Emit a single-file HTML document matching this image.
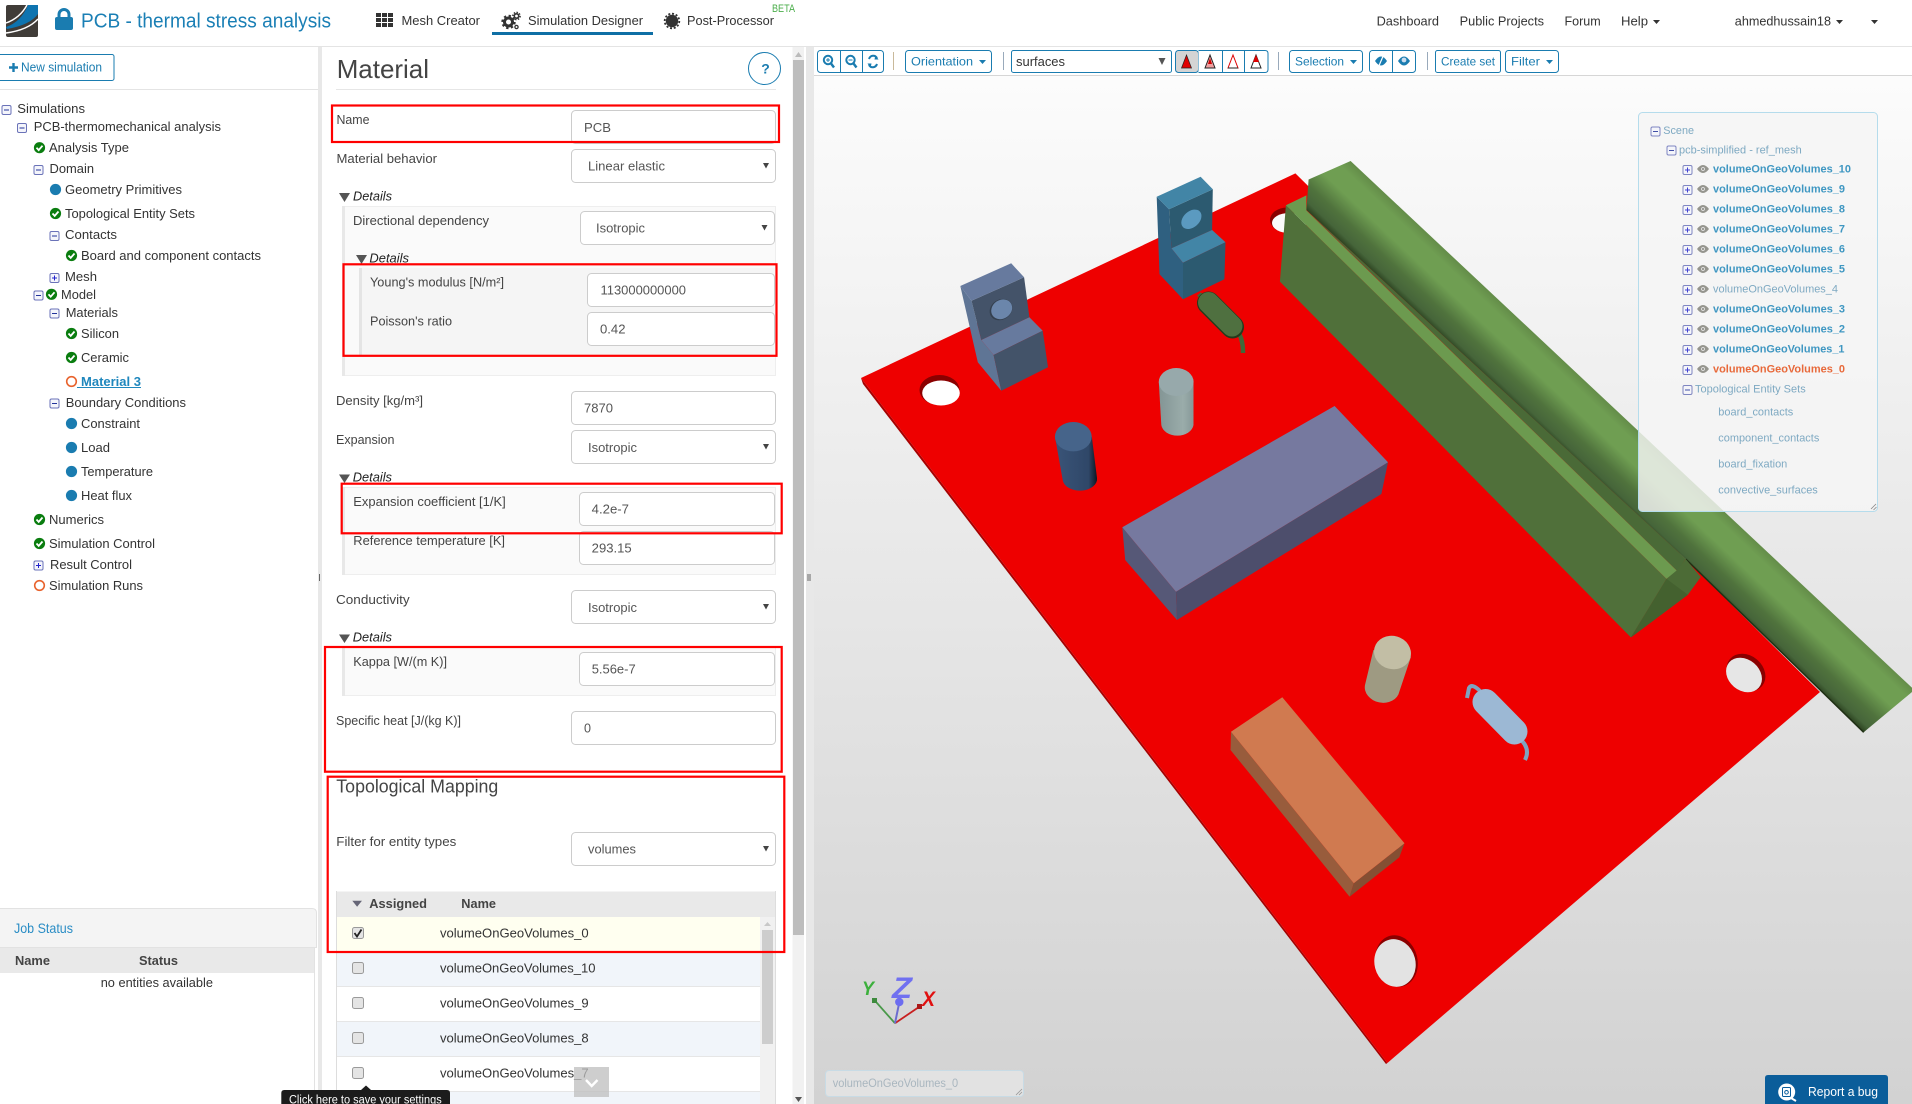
<!DOCTYPE html>
<html lang="en"><head><meta charset="utf-8"><title>PCB - thermal stress analysis</title>
<style>
html,body{margin:0;padding:0;width:1912px;height:1104px;overflow:hidden;background:#fff}
svg{display:block}
text{font-family:"Liberation Sans",Arial,sans-serif;font-size:13px;white-space:pre}
.nv{fill:#333}.l{fill:#444}.v{fill:#555}.n{fill:#333}
.h{font-weight:bold;fill:#444}
.it{font-style:italic;fill:#222}
.tb{fill:#1a7cb0;font-size:12px}
.st{fill:#7ea9c2;font-size:11px}
.sb{fill:#3f97c2;font-size:11px;font-weight:bold}
.inp{fill:#fff;stroke:#ccc}
.red{fill:none;stroke:#f00;stroke-width:2.2}
.btn{fill:#fff;stroke:#1a7cb0}
.car{fill:#444}
</style></head><body>
<svg width="1912" height="1104" viewBox="0 0 1912 1104" xmlns="http://www.w3.org/2000/svg">
<defs>
<linearGradient id="bg" x1="0" y1="76" x2="0" y2="1104" gradientUnits="userSpaceOnUse"><stop offset="0" stop-color="#fcfcfc"/><stop offset="1" stop-color="#d2d2d2"/></linearGradient>
<linearGradient id="rail" x1="1863.7" y1="732.3" x2="1908.5" y2="684.5" gradientUnits="userSpaceOnUse"><stop offset="0" stop-color="#2c4220"/><stop offset=".1" stop-color="#46653a"/><stop offset=".3" stop-color="#50733d"/><stop offset=".58" stop-color="#6f9e52"/><stop offset=".85" stop-color="#6f9e52"/><stop offset="1" stop-color="#648d49"/></linearGradient>
<linearGradient id="cyl1" x1="0" x2="1" y1="0" y2="0"><stop offset="0" stop-color="#839595"/><stop offset=".7" stop-color="#9aacaa"/><stop offset="1" stop-color="#879999"/></linearGradient>
<linearGradient id="cyl2" x1="0" x2="1" y1="0" y2="0"><stop offset="0" stop-color="#3a5478"/><stop offset=".8" stop-color="#2f4768"/><stop offset="1" stop-color="#0e1622"/></linearGradient>
<g id="ck"><circle r="5.6" fill="#0a7d0f"/><path d="M-3 0L-.8 2.4L3 -2" fill="none" stroke="#fff" stroke-width="1.8"/></g>
<circle id="dt" r="5.6" fill="#1a7cb0"/>
<circle id="rg" r="4.8" fill="none" stroke="#e8622c" stroke-width="1.6"/>
<g id="mi"><rect x="-4.5" y="-4.5" width="9" height="9" rx="1.5" fill="#f4f5fb" stroke="#6a72b8"/><path d="M-2.5 0H2.5" stroke="#223399"/></g>
<g id="pl"><rect x="-4.5" y="-4.5" width="9" height="9" rx="1.5" fill="#f4f5fb" stroke="#6a72b8"/><path d="M-2.5 0H2.5M0 -2.5V2.5" stroke="#2222cc"/></g>
<g id="ey"><path d="M-6 0Q0 -8 6 0Q0 8 -6 0Z" fill="#85857d"/><circle r="1.9" fill="#e8e8e8"/><circle r="1" fill="#6f6f67"/></g>
</defs>

<!-- 3D viewport -->
<rect x="814" y="76" width="1098" height="1028" fill="url(#bg)"/>
<rect x="814" y="75" width="1098" height="1" fill="#d6d6d6"/>
<!-- board -->
<polygon points="861,378 863,384 1386,1064 1387.4,1063" fill="#a80000"/>
<polygon points="861,378 1295.4,173.4 1820,692 1387.4,1063" fill="#ee0000"/>
<!-- holes -->
<ellipse cx="939.5" cy="390" rx="20" ry="15" fill="#8a0000"/><ellipse cx="941" cy="393" rx="18.8" ry="12.5" fill="#fff"/>
<ellipse cx="1287" cy="220" rx="17" ry="12.5" fill="#8a0000"/><ellipse cx="1289" cy="223" rx="17" ry="10" fill="#fbfbfb"/>
<ellipse cx="1746" cy="672.5" rx="21" ry="17" transform="rotate(40 1746 672.5)" fill="#8a0000"/><ellipse cx="1744" cy="675" rx="19.5" ry="15.5" transform="rotate(40 1744 675)" fill="#e6e6e6"/>
<ellipse cx="1396.5" cy="961" rx="21" ry="26" transform="rotate(-14 1396.5 961)" fill="#8a0000"/><ellipse cx="1395" cy="963" rx="20.5" ry="24" transform="rotate(-14 1395 963)" fill="#e3e3e3"/>
<!-- left bracket -->
<polygon points="960.3,286 971.5,300.7 981.3,340 993.6,355 1001.3,390.7 977.8,362.3 970,328.3" fill="#5f7595"/>
<polygon points="971.5,300.7 1024.1,277.3 1029.4,317.3 981.3,340" fill="#445369"/>
<polygon points="960.3,286 1011.2,263.3 1024.1,277.3 971.5,300.7" fill="#677a9e"/>
<polygon points="981.3,340 1029.4,317.3 1042.7,330.7 993.6,355" fill="#677a9e"/>
<polygon points="993.6,355 1042.7,330.7 1048,367.3 1001.3,390.7" fill="#435369"/>
<ellipse cx="1001" cy="309.6" rx="12" ry="10" transform="rotate(-35 1001 309.6)" fill="#34404f"/>
<ellipse cx="1001.7" cy="309.3" rx="11" ry="9.3" transform="rotate(-35 1001.7 309.3)" fill="#6b86ab"/>
<!-- right bracket -->
<polygon points="1156.7,196.7 1169,209.3 1171.5,248.3 1183,262.7 1183,299.3 1159.5,274.3" fill="#2f6080"/>
<polygon points="1169,209.3 1212.8,189.3 1212.1,230 1171.5,248.3" fill="#2c5a70"/>
<polygon points="1156.7,196.7 1200.6,176.7 1212.8,189.3 1169,209.3" fill="#4285a6"/>
<polygon points="1171.5,248.3 1212.1,230 1225.5,242.3 1183,262.7" fill="#4285a6"/>
<polygon points="1183,262.7 1225.5,242.3 1224.4,279.3 1183,299.3" fill="#2c5a70"/>
<ellipse cx="1191.4" cy="219.3" rx="11.5" ry="8" transform="rotate(-42 1191.4 219.3)" fill="#5b9ac0"/>
<!-- green resistor -->
<path d="M1199 294L1207 303" stroke="#3f6a3a" stroke-width="5" fill="none"/>
<path d="M1236.7 330.7Q1243 337 1243 353" stroke="#3f6a3a" stroke-width="4.5" fill="none"/>
<path d="M1208.5 303L1232.5 327" stroke="#243a1c" stroke-width="23" stroke-linecap="round"/>
<path d="M1208.5 302.5L1232 326" stroke="#4f7040" stroke-width="21" stroke-linecap="round"/>
<!-- grey cylinder -->
<path d="M1158.8 381.7L1161.3 425A16.2 12 0 0 0 1193.5 425L1193.5 381.7Z" fill="url(#cyl1)"/>
<ellipse cx="1176.2" cy="382" rx="17.4" ry="14" fill="#97a9ab"/>
<!-- blue cylinder -->
<path d="M1055 436.7L1062.7 480A17 11.5 0 0 0 1097 478L1091.8 436.7Z" fill="url(#cyl2)"/>
<ellipse cx="1073.3" cy="436.7" rx="18.4" ry="14.7" fill="#46648a"/>
<!-- purple box -->
<polygon points="1122.3,527.3 1176,591.7 1177,620 1125.2,560" fill="#565877"/>
<polygon points="1176,591.7 1388,462.3 1381.4,494 1177,620" fill="#4d4e6c"/>
<polygon points="1122.3,527.3 1334.6,406 1388,462.3 1176,591.7" fill="#76799f"/>
<!-- orange box -->
<polygon points="1231,731.7 1353.8,883.3 1349.6,896.7 1230.5,750" fill="#985c3c"/>
<polygon points="1353.8,883.3 1404.5,843.3 1399.3,857.3 1349.6,896.7" fill="#854f33"/>
<polygon points="1231,731.7 1282.3,697.3 1404.5,843.3 1353.8,883.3" fill="#d07a50"/>
<!-- beige cylinder -->
<path d="M1373.4 650L1365 685A17 14 10 0 0 1399.3 691.7L1411 656.7Z" fill="#9e9a82"/>
<ellipse cx="1392.5" cy="652.5" rx="18.6" ry="16.6" transform="rotate(15 1392.5 652.5)" fill="#c2bea5"/>
<!-- light-blue capsule -->
<path d="M1480 691Q1472 683 1469 688L1467 698" stroke="#7ea3c0" stroke-width="4" fill="none"/>
<path d="M1519 738Q1531 748 1525 760" stroke="#7ea3c0" stroke-width="4" fill="none"/>
<path d="M1485.5 702L1514.5 731.5" stroke="#9cb8d4" stroke-width="26" stroke-linecap="round"/>
<!-- green connector -->
<polygon points="1350.6,161 1912,687.7 1912,692 1863.7,732.3 1685.8,559.1 1306.4,210 1308.6,179.5" fill="url(#rail)"/>
<path d="M1685.8 559.1L1863.7 732.3" stroke="#1f2f14" stroke-width="1.5"/>
<polygon points="1306.4,210 1685.8,559 1677.2,571" fill="#4a6a37"/>
<polygon points="1285.9,205.2 1279.9,281.6 1630.9,637.4 1666.5,578.9" fill="#50703a"/>
<polygon points="1285.9,205.2 1306.4,195.4 1306.4,210.4 1677.2,571 1666.5,578.9" fill="#6c9a4f"/>
<polygon points="1666.5,578.9 1677.2,570 1685.8,559.1 1700.8,577 1687.9,594.7 1630.9,637.4" fill="#4c6b36"/>
<polygon points="1666.5,578.9 1687.9,594.7 1630.9,637.4" fill="#44612f"/>
<!-- axes -->
<path d="M895 1023.3L874.3 1000" stroke="#4a994a" stroke-width="1.8"/><rect x="872" y="998" width="5" height="5" fill="#3d8a3d"/>
<path d="M895 1023.3L919.3 1006.7" stroke="#c82020" stroke-width="1.8"/><rect x="917" y="1004" width="5" height="5" fill="#aa1818"/>
<path d="M895 1023.3L899.3 1002.3" stroke="#6c6cd0" stroke-width="2"/><circle cx="899.3" cy="1002" r="4.2" fill="#6c6cf0"/>
<text x="862" y="995" textLength="12" lengthAdjust="spacingAndGlyphs" style="font-size:19px;font-weight:bold;font-style:italic;fill:#3cb03c">Y</text>
<text x="892" y="998" textLength="20" lengthAdjust="spacingAndGlyphs" style="font-size:30px;font-weight:bold;font-style:italic;fill:#7070f0">Z</text>
<text x="922" y="1006" textLength="13" lengthAdjust="spacingAndGlyphs" style="font-size:21px;font-weight:bold;font-style:italic;fill:#e01010">X</text>
<!-- bottom name box -->
<rect x="825.5" y="1070.5" width="198" height="26" rx="3.5" fill="#e2e2e2" stroke="#c8dbe5"/>
<text x="832.7" y="1087" textLength="125.5" lengthAdjust="spacingAndGlyphs" style="font-size:12px;fill:#a9b6bf">volumeOnGeoVolumes_0</text>
<path d="M1016 1095L1022 1089M1019 1095L1022 1092" stroke="#999" stroke-width=".8"/>
<!-- scene tree -->
<rect x="1638.5" y="112.5" width="239" height="399" rx="4" fill="#f5f5f5" fill-opacity=".82" stroke="#b5dcec"/>
<path d="M1871 509L1876 504M1873.5 510L1876.5 507" stroke="#888" stroke-width=".8"/>
<g opacity=".85">
<use href="#mi" x="1655.5" y="131.5"/><use href="#mi" x="1671.5" y="150.5"/>
<use href="#pl" x="1687.5" y="170"/><use href="#pl" x="1687.5" y="190"/><use href="#pl" x="1687.5" y="210"/><use href="#pl" x="1687.5" y="230"/><use href="#pl" x="1687.5" y="250"/><use href="#pl" x="1687.5" y="270"/><use href="#pl" x="1687.5" y="290"/><use href="#pl" x="1687.5" y="310"/><use href="#pl" x="1687.5" y="330"/><use href="#pl" x="1687.5" y="350"/><use href="#pl" x="1687.5" y="370"/>
<use href="#mi" x="1687.5" y="390"/>
<use href="#ey" x="1703" y="169"/><use href="#ey" x="1703" y="189"/><use href="#ey" x="1703" y="209"/><use href="#ey" x="1703" y="229"/><use href="#ey" x="1703" y="249"/><use href="#ey" x="1703" y="269"/><use href="#ey" x="1703" y="289"/><use href="#ey" x="1703" y="309"/><use href="#ey" x="1703" y="329"/><use href="#ey" x="1703" y="349"/><use href="#ey" x="1703" y="369"/>
</g>
<text class="st" x="1663.3" y="134" textLength="30.7" lengthAdjust="spacingAndGlyphs">Scene</text>
<text class="st" x="1679" y="153.3" textLength="122.7" lengthAdjust="spacingAndGlyphs">pcb-simplified - ref_mesh</text>
<text class="sb" x="1713" y="172.7" textLength="138" lengthAdjust="spacingAndGlyphs">volumeOnGeoVolumes_10</text>
<text class="sb" x="1713" y="192.7" textLength="132" lengthAdjust="spacingAndGlyphs">volumeOnGeoVolumes_9</text>
<text class="sb" x="1713" y="212.7" textLength="132" lengthAdjust="spacingAndGlyphs">volumeOnGeoVolumes_8</text>
<text class="sb" x="1713" y="232.7" textLength="132" lengthAdjust="spacingAndGlyphs">volumeOnGeoVolumes_7</text>
<text class="sb" x="1713" y="252.7" textLength="132" lengthAdjust="spacingAndGlyphs">volumeOnGeoVolumes_6</text>
<text class="sb" x="1713" y="272.7" textLength="132" lengthAdjust="spacingAndGlyphs">volumeOnGeoVolumes_5</text>
<text class="st" x="1713" y="292.7" textLength="125" lengthAdjust="spacingAndGlyphs">volumeOnGeoVolumes_4</text>
<text class="sb" x="1713" y="312.7" textLength="132" lengthAdjust="spacingAndGlyphs">volumeOnGeoVolumes_3</text>
<text class="sb" x="1713" y="332.7" textLength="132" lengthAdjust="spacingAndGlyphs">volumeOnGeoVolumes_2</text>
<text class="sb" x="1713" y="352.7" textLength="131.5" lengthAdjust="spacingAndGlyphs">volumeOnGeoVolumes_1</text>
<text class="sb" x="1713" y="372.7" textLength="132" lengthAdjust="spacingAndGlyphs" style="fill:#e8693a">volumeOnGeoVolumes_0</text>
<text class="st" x="1695" y="392.7" textLength="110.7" lengthAdjust="spacingAndGlyphs">Topological Entity Sets</text>
<text class="st" x="1718.3" y="415.7" textLength="75" lengthAdjust="spacingAndGlyphs">board_contacts</text>
<text class="st" x="1718.3" y="441.7" textLength="101" lengthAdjust="spacingAndGlyphs">component_contacts</text>
<text class="st" x="1718.3" y="467.7" textLength="69" lengthAdjust="spacingAndGlyphs">board_fixation</text>
<text class="st" x="1718.3" y="493.7" textLength="99.5" lengthAdjust="spacingAndGlyphs">convective_surfaces</text>
<!-- report a bug -->
<path d="M1765 1104V1078Q1765 1075 1768 1075H1885Q1888 1075 1888 1078V1104Z" fill="#0a5d9a"/>
<circle cx="1786.7" cy="1092" r="8.5" fill="#fff"/><path d="M1791 1098L1796 1101" stroke="#fff" stroke-width="2"/><rect x="1782.5" y="1087.5" width="8" height="9" rx="1" fill="none" stroke="#0a5d9a"/><circle cx="1786.5" cy="1092.3" r="1.8" fill="none" stroke="#0a5d9a"/>
<text x="1808" y="1096" textLength="70" lengthAdjust="spacingAndGlyphs" style="font-size:12.5px;fill:#fff">Report a bug</text>

<!-- toolbar -->
<rect x="817.5" y="50.5" width="66" height="22" rx="3" class="btn"/><path d="M840.5 50.5V72.5M862.5 50.5V72.5" stroke="#1a7cb0"/>
<g fill="none" stroke="#1a7cb0"><circle cx="828" cy="60" r="4.2" stroke-width="2"/><path d="M831 63.5L834 67.5" stroke-width="2.4"/><path d="M826 60H830M828 58V62" stroke-width="1"/>
<circle cx="850.5" cy="60" r="4.2" stroke-width="2"/><path d="M853.5 63.5L856.5 67.5" stroke-width="2.4"/><path d="M848.5 60H852.5" stroke-width="1"/>
<path d="M869 59A4.5 5 0 0 1 877 58M877 64A4.5 5 0 0 1 869 65" stroke-width="2"/></g>
<path d="M875.5 55L878.5 59.5H874.5ZM870.5 68L867.5 63.5H871.5Z" fill="#1a7cb0"/>
<rect x="893" y="52" width="1" height="18" fill="#c9b99a"/>
<rect x="905.5" y="50.5" width="86" height="22" rx="3" class="btn"/>
<text class="tb" x="911" y="65.7" textLength="62" lengthAdjust="spacingAndGlyphs">Orientation</text><polygon points="979,60 986,60 982.5,64" fill="#1a7cb0"/>
<rect x="1003" y="52" width="1" height="18" fill="#9ab"/>
<rect x="1011.5" y="50.5" width="160" height="22" rx="2" fill="#fff" stroke="#1a7cb0"/>
<text x="1016" y="66" textLength="49" lengthAdjust="spacingAndGlyphs" style="fill:#333">surfaces</text><polygon points="1158.5,58 1165.5,58 1162,65" fill="#555"/>
<rect x="1175.5" y="50.5" width="23" height="22" rx="3" fill="#d4d4d4" stroke="#1a7cb0"/>
<path d="M1198.5 50.5H1265Q1268 50.5 1268 53.5V69.5Q1268 72.5 1265 72.5H1198.5" class="btn"/><path d="M1222.5 50.5V72.5M1244.5 50.5V72.5" stroke="#1a7cb0"/>
<polygon points="1181.5,68 1186.5,55 1191.5,68" fill="#e00000" stroke="#222" stroke-width=".7"/>
<polygon points="1205,68 1210,55 1215,68" fill="#f0a0a0" stroke="#222" stroke-width="1"/><polygon points="1208,64 1210,58 1212,64" fill="#d00000"/>
<polygon points="1228,68 1233,55 1238,68" fill="#fff" stroke="#d00" stroke-width="1"/><path d="M1228 68H1238" stroke="#222"/>
<polygon points="1251,68 1256,55 1261,68" fill="#fff" stroke="#222" stroke-width="1"/><polygon points="1253,62 1256,55 1259,62" fill="#e00000"/>
<rect x="1278" y="52" width="1" height="18" fill="#9ab"/>
<rect x="1289.5" y="50.5" width="73" height="22" rx="3" class="btn"/>
<text class="tb" x="1295" y="65.7" textLength="49" lengthAdjust="spacingAndGlyphs">Selection</text><polygon points="1350,60 1357,60 1353.5,64" fill="#1a7cb0"/>
<rect x="1369.5" y="50.5" width="46" height="22" rx="3" class="btn"/><path d="M1392.5 50.5V72.5" stroke="#1a7cb0"/>
<path d="M1375 61Q1381 52 1387 61Q1381 70 1375 61Z" fill="#1a7cb0"/><path d="M1378 68L1384 54" stroke="#fff" stroke-width="1.2"/>
<path d="M1398 61Q1404 52 1410 61Q1404 70 1398 61Z" fill="#1a7cb0"/><circle cx="1404" cy="60" r="2.4" fill="#cde"/>
<rect x="1427" y="52" width="1" height="18" fill="#9ab"/>
<rect x="1435.5" y="50.5" width="65" height="22" rx="2" class="btn"/>
<text class="tb" x="1441" y="65.7" textLength="54" lengthAdjust="spacingAndGlyphs">Create set</text>
<rect x="1505.5" y="50.5" width="53" height="22" rx="3" class="btn"/>
<text class="tb" x="1511" y="65.7" textLength="29" lengthAdjust="spacingAndGlyphs">Filter</text><polygon points="1546,60 1553,60 1549.5,64" fill="#1a7cb0"/>

<!-- gutters -->
<rect x="318" y="47" width="4" height="1057" fill="#e8e8e8"/>
<rect x="319" y="574" width="1" height="7" fill="#666"/>
<rect x="792.5" y="47" width="11.5" height="1057" fill="#f1f1f1"/>
<rect x="793" y="60" width="11" height="875" fill="#bdbdbd"/>
<polygon points="798.5,52 802,57 795,57" fill="#bbb"/>
<polygon points="795,1097 802,1097 798.5,1102" fill="#555"/>
<rect x="806" y="47" width="8" height="1057" fill="#e8e8e8"/>
<rect x="807.5" y="574" width="1" height="7" fill="#666"/><rect x="809.5" y="574" width="1" height="7" fill="#666"/>

<!-- header -->
<rect x="0" y="46" width="1912" height="1" fill="#e4e4e4"/>
<rect x="6" y="5" width="32" height="32" rx="2" fill="#403c38"/>
<path d="M28 5H38V14Q30 25 7 29L6 27Q21 22 28 5Z" fill="#0e74b0"/>
<path d="M6 23Q20 18 27 5" stroke="#fff" stroke-width="1.4" fill="none"/>
<path d="M6 33Q28 30 38 19" stroke="#fff" stroke-width="1.4" fill="none"/>
<rect x="55" y="17" width="18" height="13" rx="2" fill="#1a7cb0"/>
<path d="M59 18V14.5A5 5 0 0 1 69 14.5V18" fill="none" stroke="#1a7cb0" stroke-width="3"/>
<text x="81" y="27.7" textLength="250" lengthAdjust="spacingAndGlyphs" style="font-size:20px;fill:#1a7fb5">PCB - thermal stress analysis</text>
<g fill="#333"><rect x="376" y="13" width="5" height="4"/><rect x="382" y="13" width="5" height="4"/><rect x="388" y="13" width="5" height="4"/><rect x="376" y="18" width="5" height="4"/><rect x="382" y="18" width="5" height="4"/><rect x="388" y="18" width="5" height="4"/><rect x="376" y="23" width="5" height="4"/><rect x="382" y="23" width="5" height="4"/><rect x="388" y="23" width="5" height="4"/></g>
<text class="nv" x="401.5" y="25" textLength="78.5" lengthAdjust="spacingAndGlyphs">Mesh Creator</text>
<g fill="none" stroke="#333"><circle cx="508.5" cy="22" r="4" stroke-width="3"/><circle cx="508.5" cy="22" r="6" stroke-width="2.4" stroke-dasharray="2.3 2.4"/><circle cx="516.5" cy="16" r="2.2" stroke-width="1.6"/><circle cx="516.5" cy="16" r="3.6" stroke-width="1.5" stroke-dasharray="1.5 1.3"/><circle cx="516.5" cy="27" r="1.6" stroke-width="1.3"/></g>
<text class="nv" x="528" y="25" textLength="115" lengthAdjust="spacingAndGlyphs">Simulation Designer</text>
<rect x="492" y="32" width="161" height="3" fill="#0f6fa5"/>
<circle cx="672" cy="21" r="6.2" fill="#333"/><circle cx="672" cy="21" r="7.3" fill="none" stroke="#333" stroke-width="1.8" stroke-dasharray="2 1.8"/>
<text class="nv" x="687" y="25" textLength="87" lengthAdjust="spacingAndGlyphs">Post-Processor</text>
<text x="772" y="12" textLength="23" lengthAdjust="spacingAndGlyphs" style="font-size:11px;fill:#4cae4c">BETA</text>
<text class="nv" x="1376.6" y="25.7" textLength="62.4" lengthAdjust="spacingAndGlyphs">Dashboard</text>
<text class="nv" x="1459.6" y="25.7" textLength="84.4" lengthAdjust="spacingAndGlyphs">Public Projects</text>
<text class="nv" x="1564.5" y="25.7" textLength="36.2" lengthAdjust="spacingAndGlyphs">Forum</text>
<text class="nv" x="1621" y="25.7" textLength="27" lengthAdjust="spacingAndGlyphs">Help</text>
<polygon points="1653,20 1660,20 1656.5,24" fill="#333"/>
<text class="nv" x="1734.8" y="25.7" textLength="96.2" lengthAdjust="spacingAndGlyphs">ahmedhussain18</text>
<polygon points="1836,20 1843,20 1839.5,24" fill="#333"/>
<polygon points="1871,20 1878,20 1874.5,24" fill="#333"/>

<!-- left panel -->
<rect x="-3" y="54.5" width="117" height="26" rx="2" class="btn"/>
<path d="M9 68H18M13.5 63.5V72.5" stroke="#1a7cb0" stroke-width="2.4" transform="translate(0,-.5)"/>
<text x="21" y="71.7" textLength="81" lengthAdjust="spacingAndGlyphs" style="font-size:13px;fill:#1a7cb0">New simulation</text>
<rect x="0" y="89" width="318" height="1" fill="#e4e4e4"/>
<use href="#mi" x="6.5" y="110"/><text class="n" x="17.3" y="113" textLength="67.7" lengthAdjust="spacingAndGlyphs">Simulations</text>
<use href="#mi" x="22" y="128"/><text class="n" x="33.7" y="131" textLength="187.3" lengthAdjust="spacingAndGlyphs">PCB-thermomechanical analysis</text>
<use href="#ck" x="39.5" y="147.7"/><text class="n" x="49" y="152" textLength="80" lengthAdjust="spacingAndGlyphs">Analysis Type</text>
<use href="#mi" x="38.5" y="170"/><text class="n" x="49.5" y="173" textLength="44.5" lengthAdjust="spacingAndGlyphs">Domain</text>
<use href="#dt" x="55.5" y="189.5"/><text class="n" x="65" y="194" textLength="117" lengthAdjust="spacingAndGlyphs">Geometry Primitives</text>
<use href="#ck" x="55.5" y="213.5"/><text class="n" x="65" y="218" textLength="130" lengthAdjust="spacingAndGlyphs">Topological Entity Sets</text>
<use href="#mi" x="54.5" y="236"/><text class="n" x="65" y="239" textLength="52" lengthAdjust="spacingAndGlyphs">Contacts</text>
<use href="#ck" x="71.5" y="255.5"/><text class="n" x="81" y="260" textLength="180" lengthAdjust="spacingAndGlyphs">Board and component contacts</text>
<use href="#pl" x="54.5" y="278"/><text class="n" x="65" y="281" textLength="32" lengthAdjust="spacingAndGlyphs">Mesh</text>
<use href="#mi" x="38.5" y="295.5"/><use href="#ck" x="51.5" y="294.3"/><text class="n" x="61" y="299" textLength="35" lengthAdjust="spacingAndGlyphs">Model</text>
<use href="#mi" x="54.5" y="313.5"/><text class="n" x="65.7" y="317" textLength="52.3" lengthAdjust="spacingAndGlyphs">Materials</text>
<use href="#ck" x="71.5" y="333.5"/><text class="n" x="81" y="338" textLength="38" lengthAdjust="spacingAndGlyphs">Silicon</text>
<use href="#ck" x="71.5" y="357.5"/><text class="n" x="81" y="362" textLength="48" lengthAdjust="spacingAndGlyphs">Ceramic</text>
<use href="#rg" x="71.5" y="381.5"/><text x="81" y="386" textLength="60" lengthAdjust="spacingAndGlyphs" style="font-weight:bold;fill:#1f87bd">Material 3</text><rect x="77" y="387" width="64" height="1" fill="#1f87bd"/>
<use href="#mi" x="54.5" y="403.5"/><text class="n" x="65.7" y="407" textLength="120.3" lengthAdjust="spacingAndGlyphs">Boundary Conditions</text>
<use href="#dt" x="71.5" y="423.5"/><text class="n" x="81" y="428" textLength="59" lengthAdjust="spacingAndGlyphs">Constraint</text>
<use href="#dt" x="71.5" y="447.5"/><text class="n" x="81" y="452" textLength="29" lengthAdjust="spacingAndGlyphs">Load</text>
<use href="#dt" x="71.5" y="471.5"/><text class="n" x="81" y="476" textLength="72" lengthAdjust="spacingAndGlyphs">Temperature</text>
<use href="#dt" x="71.5" y="495.5"/><text class="n" x="81" y="500" textLength="51" lengthAdjust="spacingAndGlyphs">Heat flux</text>
<use href="#ck" x="39.5" y="519.5"/><text class="n" x="49" y="524" textLength="55" lengthAdjust="spacingAndGlyphs">Numerics</text>
<use href="#ck" x="39.5" y="543.5"/><text class="n" x="49" y="548" textLength="106" lengthAdjust="spacingAndGlyphs">Simulation Control</text>
<use href="#pl" x="38.5" y="565.5"/><text class="n" x="50" y="569" textLength="82" lengthAdjust="spacingAndGlyphs">Result Control</text>
<use href="#rg" x="39.5" y="585.5"/><text class="n" x="49" y="590" textLength="94" lengthAdjust="spacingAndGlyphs">Simulation Runs</text>

<!-- job status -->
<path d="M-2 947.5V908.5H312Q316.5 908.5 316.5 913V947.5Z" fill="#f4f4f4" stroke="#e2e2e2"/>
<text x="14" y="933" textLength="59" lengthAdjust="spacingAndGlyphs" style="font-size:14px;fill:#2a8dc5">Job Status</text>
<rect x="0" y="948" width="314" height="25" fill="#e9e9e9"/>
<rect x="314" y="948" width="1" height="156" fill="#e2e2e2"/>
<text class="h" x="15" y="965" textLength="35" lengthAdjust="spacingAndGlyphs">Name</text>
<text class="h" x="139" y="965" textLength="39" lengthAdjust="spacingAndGlyphs">Status</text>
<text class="l" x="100.7" y="987" textLength="112.3" lengthAdjust="spacingAndGlyphs" style="fill:#333">no entities available</text>

<!-- form -->
<text x="336.7" y="78" textLength="92.3" lengthAdjust="spacingAndGlyphs" style="font-size:26px;fill:#444">Material</text>
<rect x="336" y="89" width="440" height="1" fill="#e6e6e6"/>
<ellipse cx="764.5" cy="68.5" rx="16" ry="16" fill="#fff" stroke="#1a7cb0"/>
<text x="761.2" y="73.5" style="font-size:14px;font-weight:bold;fill:#1a7cb0">?</text>

<text class="l" x="336.5" y="124" textLength="33" lengthAdjust="spacingAndGlyphs">Name</text>
<rect class="inp" x="571.5" y="110.5" width="204" height="33" rx="4"/>
<text class="v" x="584" y="132" textLength="27" lengthAdjust="spacingAndGlyphs">PCB</text>
<text class="l" x="336.5" y="163" textLength="100.5" lengthAdjust="spacingAndGlyphs">Material behavior</text>
<rect class="inp" x="571.5" y="149.5" width="204" height="33" rx="4"/>
<text class="v" x="588" y="170.7" textLength="77" lengthAdjust="spacingAndGlyphs">Linear elastic</text>
<polygon class="car" points="763,163 769,163 766,168.5"/>

<polygon points="339,193 350,193 344.5,202" fill="#555"/>
<text class="it" x="353" y="200.7" textLength="39" lengthAdjust="spacingAndGlyphs">Details</text>
<rect x="342.5" y="206.5" width="433" height="169" fill="#fafafa" stroke="#eee"/>
<rect x="342" y="206" width="3" height="170" fill="#e8e8e8"/>
<text class="l" x="353" y="225" textLength="136" lengthAdjust="spacingAndGlyphs">Directional dependency</text>
<rect class="inp" x="580.5" y="211.5" width="194" height="33" rx="4"/>
<text class="v" x="596" y="232.7" textLength="49" lengthAdjust="spacingAndGlyphs">Isotropic</text>
<polygon class="car" points="761.5,225 767.5,225 764.5,230.5"/>
<polygon points="356,255 367,255 361.5,264" fill="#555"/>
<text class="it" x="369.4" y="262.7" textLength="39.6" lengthAdjust="spacingAndGlyphs">Details</text>
<rect x="359" y="268" width="417" height="87" fill="#f5f5f5"/>
<rect x="359" y="268" width="3" height="87" fill="#e4e4e4"/>
<text class="l" x="370" y="286.7" textLength="134" lengthAdjust="spacingAndGlyphs">Young's modulus [N/m²]</text>
<rect class="inp" x="587.5" y="273.5" width="187" height="33" rx="4"/>
<text class="v" x="600.5" y="294.7" textLength="85.5" lengthAdjust="spacingAndGlyphs">113000000000</text>
<text class="l" x="370" y="325.7" textLength="82" lengthAdjust="spacingAndGlyphs">Poisson's ratio</text>
<rect class="inp" x="587.5" y="312.5" width="187" height="33" rx="4"/>
<text class="v" x="600" y="333.7" textLength="25.5" lengthAdjust="spacingAndGlyphs">0.42</text>

<text class="l" x="336" y="405" textLength="87" lengthAdjust="spacingAndGlyphs">Density [kg/m³]</text>
<rect class="inp" x="571.5" y="391.5" width="204" height="33" rx="4"/>
<text class="v" x="584" y="412.7" textLength="29" lengthAdjust="spacingAndGlyphs">7870</text>
<text class="l" x="336" y="444" textLength="58.5" lengthAdjust="spacingAndGlyphs">Expansion</text>
<rect class="inp" x="571.5" y="430.5" width="204" height="33" rx="4"/>
<text class="v" x="588" y="452" textLength="49" lengthAdjust="spacingAndGlyphs">Isotropic</text>
<polygon class="car" points="763,444 769,444 766,449.5"/>
<polygon points="339,474.5 350,474.5 344.5,483" fill="#555"/>
<text class="it" x="352.7" y="481.7" textLength="39.3" lengthAdjust="spacingAndGlyphs">Details</text>
<rect x="342.5" y="487.5" width="433" height="87" fill="#fafafa" stroke="#eee"/>
<rect x="342" y="487" width="3" height="88" fill="#e8e8e8"/>
<text class="l" x="353.3" y="506" textLength="152.4" lengthAdjust="spacingAndGlyphs">Expansion coefficient [1/K]</text>
<rect class="inp" x="579.5" y="492.5" width="195" height="33" rx="4"/>
<text class="v" x="591.7" y="513.7" textLength="37.3" lengthAdjust="spacingAndGlyphs">4.2e-7</text>
<text class="l" x="353.3" y="545" textLength="151.7" lengthAdjust="spacingAndGlyphs">Reference temperature [K]</text>
<rect class="inp" x="579.5" y="531.5" width="195" height="33" rx="4"/>
<text class="v" x="591.7" y="552.7" textLength="40" lengthAdjust="spacingAndGlyphs">293.15</text>
<text class="l" x="336" y="604" textLength="73.7" lengthAdjust="spacingAndGlyphs">Conductivity</text>
<rect class="inp" x="571.5" y="590.5" width="204" height="33" rx="4"/>
<text class="v" x="588" y="612" textLength="49" lengthAdjust="spacingAndGlyphs">Isotropic</text>
<polygon class="car" points="763,604 769,604 766,609.5"/>
<polygon points="339,634.5 350,634.5 344.5,643" fill="#555"/>
<text class="it" x="352.7" y="641.7" textLength="39.3" lengthAdjust="spacingAndGlyphs">Details</text>
<rect x="342.5" y="647.5" width="433" height="48" fill="#fafafa" stroke="#eee"/>
<rect x="342" y="647" width="3" height="49" fill="#e8e8e8"/>
<text class="l" x="353.3" y="666" textLength="93.7" lengthAdjust="spacingAndGlyphs">Kappa [W/(m K)]</text>
<rect class="inp" x="579.5" y="652.5" width="195" height="33" rx="4"/>
<text class="v" x="591.7" y="673.7" textLength="44" lengthAdjust="spacingAndGlyphs">5.56e-7</text>
<text class="l" x="336" y="725" textLength="125" lengthAdjust="spacingAndGlyphs">Specific heat [J/(kg K)]</text>
<rect class="inp" x="571.5" y="711.5" width="204" height="33" rx="4"/>
<text class="v" x="584" y="732.7" textLength="7" lengthAdjust="spacingAndGlyphs">0</text>

<text x="336.3" y="792.7" textLength="162" lengthAdjust="spacingAndGlyphs" style="font-size:18px;fill:#444">Topological Mapping</text>
<text class="l" x="336.3" y="846" textLength="120" lengthAdjust="spacingAndGlyphs">Filter for entity types</text>
<rect class="inp" x="571.5" y="832.5" width="204" height="33" rx="4"/>
<text class="v" x="588" y="853.7" textLength="48" lengthAdjust="spacingAndGlyphs">volumes</text>
<polygon class="car" points="763,846 769,846 766,851.5"/>

<!-- table -->
<rect x="336" y="891.5" width="440" height="25.5" fill="#e9e9e9"/>
<polygon points="352.3,900.7 362,900.7 357.1,906.7" fill="#667"/>
<text class="h" x="369.3" y="908" textLength="57.7" lengthAdjust="spacingAndGlyphs">Assigned</text>
<text class="h" x="461.3" y="908" textLength="34.7" lengthAdjust="spacingAndGlyphs">Name</text>
<rect x="337" y="917" width="423" height="35" fill="#fffff0"/>
<rect x="337" y="952" width="423" height="34" fill="#f1f5fa"/>
<rect x="337" y="987" width="423" height="34" fill="#fff"/>
<rect x="337" y="1022" width="423" height="34" fill="#f1f5fa"/>
<rect x="337" y="1057" width="423" height="34" fill="#fff"/>
<rect x="337" y="1092" width="423" height="12" fill="#f1f5fa"/>
<path d="M337 951.5H760M337 986.5H760M337 1021.5H760M337 1056.5H760M337 1091.5H760" stroke="#e6e6e6"/>
<rect x="336" y="891" width="1" height="213" fill="#ddd"/><rect x="775" y="891" width="1" height="213" fill="#ddd"/>
<rect x="760" y="917" width="15" height="187" fill="#f1f1f1"/>
<rect x="762" y="930" width="11" height="114" fill="#cdcdcd"/>
<polygon points="767.5,922 771,926 764,926" fill="#c8c8c8"/>
<g fill="#e4e4e4" stroke="#9a9a9a"><rect x="352.5" y="927.5" width="11" height="11" rx="2"/><rect x="352.5" y="962.5" width="11" height="11" rx="2"/><rect x="352.5" y="997.5" width="11" height="11" rx="2"/><rect x="352.5" y="1032.5" width="11" height="11" rx="2"/><rect x="352.5" y="1067.5" width="11" height="11" rx="2"/></g>
<path d="M354.5 933L357 936.5L361.5 929.5" fill="none" stroke="#222" stroke-width="1.8"/>
<text class="n" x="440" y="937.7" textLength="148.7" lengthAdjust="spacingAndGlyphs">volumeOnGeoVolumes_0</text>
<text class="n" x="440" y="972.7" textLength="155.5" lengthAdjust="spacingAndGlyphs">volumeOnGeoVolumes_10</text>
<text class="n" x="440" y="1007.7" textLength="148.7" lengthAdjust="spacingAndGlyphs">volumeOnGeoVolumes_9</text>
<text class="n" x="440" y="1042.7" textLength="148.7" lengthAdjust="spacingAndGlyphs">volumeOnGeoVolumes_8</text>
<text class="n" x="440" y="1077.7" textLength="148.7" lengthAdjust="spacingAndGlyphs">volumeOnGeoVolumes_7</text>

<!-- scroll-down button and tooltip -->
<rect x="574" y="1067" width="35" height="30" fill="#bdbdbd" fill-opacity=".75"/>
<path d="M586 1080L591.7 1086L597.5 1080" fill="none" stroke="#fff" stroke-width="2.4"/>
<polygon points="361,1090 366,1085.5 371,1090" fill="#1c1c1c"/>
<path d="M281.3 1104V1093Q281.3 1090 284.3 1090H447Q450 1090 450 1093V1104Z" fill="#1c1c1c"/>
<text x="289" y="1103.3" textLength="152.7" lengthAdjust="spacingAndGlyphs" style="font-size:11.5px;fill:#fff">Click here to save your settings</text>

<!-- red annotation boxes -->
<rect class="red" x="332" y="105.5" width="447" height="36.5"/>
<rect class="red" x="343.5" y="264.3" width="433" height="91.5"/>
<rect class="red" x="341.7" y="483.7" width="440" height="49.6"/>
<rect class="red" x="325" y="647" width="456.7" height="124.7"/>
<rect class="red" x="327.7" y="776.7" width="456.6" height="175.3"/>
</svg>
</body></html>
